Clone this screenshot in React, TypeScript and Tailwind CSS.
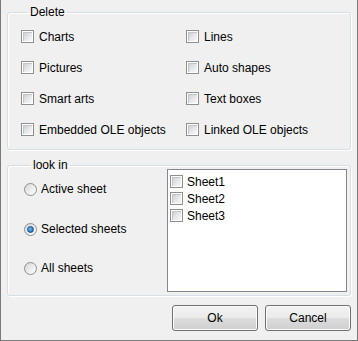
import React from "react"

const font = { fontFamily: '"Liberation Sans", Arial, sans-serif' }

function Box() {
  return (
    <span className="inline-flex h-[13px] w-[13px] shrink-0 border border-[#8e8f8f] bg-white p-px">
      <span className="block h-full w-full border-t border-l border-[#c2c6cb] bg-[linear-gradient(135deg,#cdd1d6_0%,#e4e6e8_45%,#f9f9f9_100%)]" />
    </span>
  )
}

function Check({ label }: { label: string }) {
  return (
    <label className="flex h-[31px] items-center gap-[5px] text-[12px] text-black">
      <Box />
      <span>{label}</span>
    </label>
  )
}

function Radio({ label, on }: { label: string; on?: boolean }) {
  return (
    <label className="flex h-[20px] items-center gap-[4px] text-[12px] text-black">
      <span className="flex h-[13px] w-[13px] shrink-0 items-center justify-center rounded-full border border-[#8e8f8f] bg-[linear-gradient(135deg,#d4d6d8_0%,#f0f0f0_60%,#ffffff_100%)]">
        {on && (
          <span className="block h-[7px] w-[7px] rounded-full border border-[#1d4f82] bg-[radial-gradient(circle_at_40%_40%,#7cc3ee_0%,#2a7fc4_60%,#15508e_100%)]" />
        )}
      </span>
      <span>{label}</span>
    </label>
  )
}

function Btn({ label }: { label: string }) {
  return (
    <button
      type="button"
      className="h-[26px] w-[86px] rounded-[3px] border border-[#707070] bg-[linear-gradient(#f2f2f2_0%,#ebebeb_50%,#dddddd_50%,#cfcfcf_100%)] text-[12px] text-black shadow-[inset_0_0_0_1px_#fcfcfc]"
    >
      {label}
    </button>
  )
}

export default function App() {
  return (
    <div
      className="flex h-[341px] w-[358px] flex-col border-x border-b border-[#7a7a7a] bg-[#f0f0f0] px-[6px]"
      style={font}
    >
      <fieldset className="mt-[9px] rounded-[3px] border border-[#d5dfe5] px-[13px] pt-[5px] pb-[4px] shadow-[inset_1px_1px_0_#fff,1px_1px_0_#fff]">
        <legend className="ml-[7px] px-[2px] text-[12px] leading-[7px] text-black">Delete</legend>
        <div className="grid grid-cols-[165px_1fr]">
          <Check label="Charts" />
          <Check label="Lines" />
          <Check label="Pictures" />
          <Check label="Auto shapes" />
          <Check label="Smart arts" />
          <Check label="Text boxes" />
          <Check label="Embedded OLE objects" />
          <Check label="Linked OLE objects" />
        </div>
      </fieldset>

      <fieldset className="mt-[12px] flex rounded-[3px] border border-[#d5dfe5] pr-[3px] pb-[3px] pl-[16px] shadow-[inset_1px_1px_0_#fff,1px_1px_0_#fff]">
        <legend className="ml-[7px] px-[2px] text-[12px] leading-[7px] text-black">look in</legend>
        <div className="flex">
          <div className="flex w-[143px] flex-col">
            <div className="mt-[10px]">
              <Radio label="Active sheet" />
            </div>
            <div className="mt-[20px]">
              <Radio label="Selected sheets" on />
            </div>
            <div className="mt-[19px]">
              <Radio label="All sheets" />
            </div>
          </div>
          <div className="flex h-[123px] w-[180px] flex-col border border-[#828790] bg-white px-[2px] pt-[3px]">
            {["Sheet1", "Sheet2", "Sheet3"].map((s) => (
              <label key={s} className="flex h-[17px] items-center gap-[4px] text-[12px] text-black">
                <Box />
                <span>{s}</span>
              </label>
            ))}
          </div>
        </div>
      </fieldset>

      <div className="mt-[9px] flex justify-end gap-[7px]">
        <Btn label="Ok" />
        <Btn label="Cancel" />
      </div>
    </div>
  )
}
